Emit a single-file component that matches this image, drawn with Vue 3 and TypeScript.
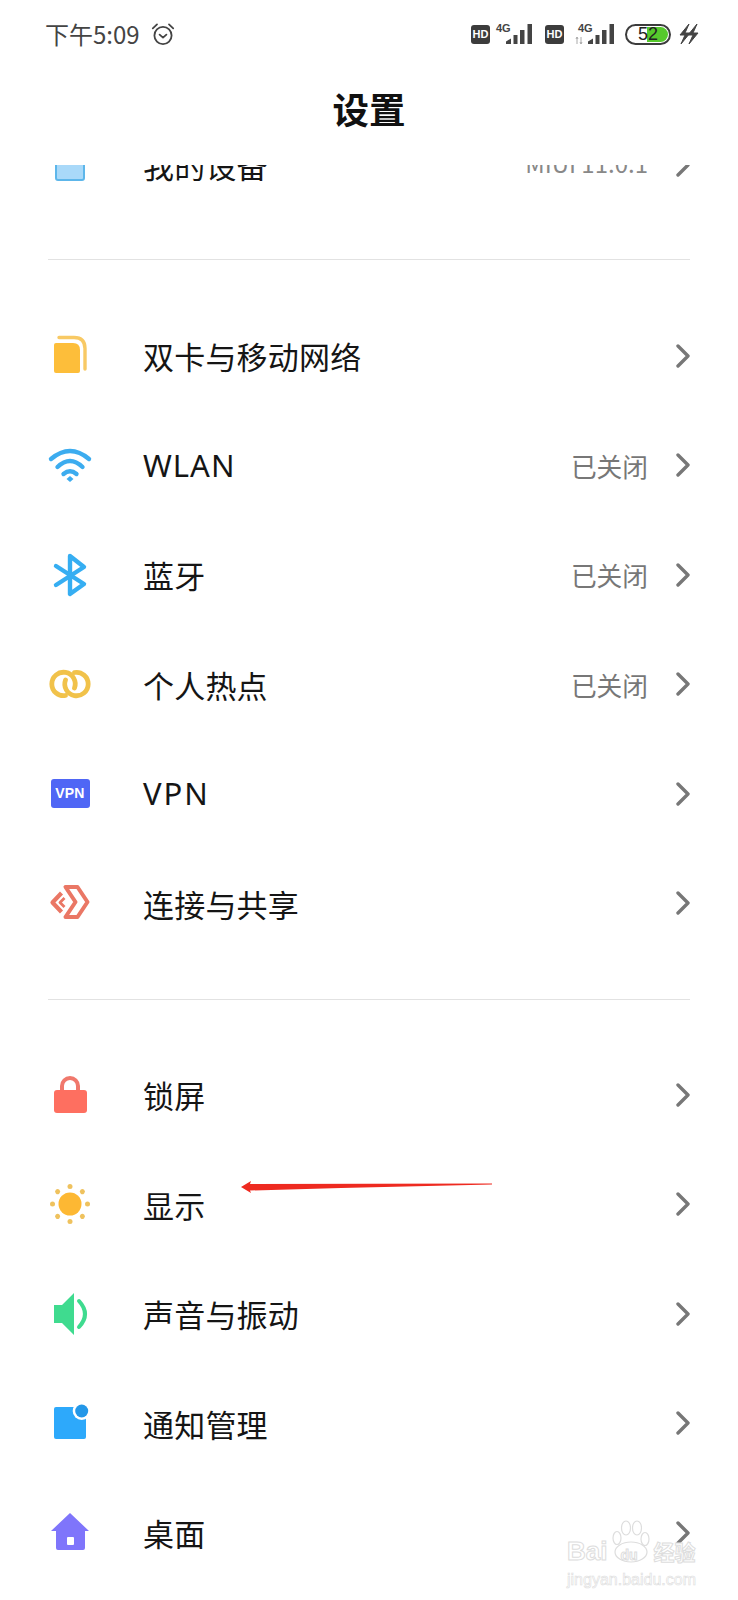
<script setup lang="ts">
interface Row { id: string; label: string; value?: string }
const clipped: Row = { id: 'device', label: '我的设备', value: 'MIUI 11.0.1' }
const groupA: Row[] = [
  { id: 'sim', label: '双卡与移动网络' },
  { id: 'wifi', label: 'WLAN', value: '已关闭' },
  { id: 'bt', label: '蓝牙', value: '已关闭' },
  { id: 'hotspot', label: '个人热点', value: '已关闭' },
  { id: 'vpn', label: 'VPN' },
  { id: 'share', label: '连接与共享' },
]
const groupB: Row[] = [
  { id: 'lock', label: '锁屏' },
  { id: 'sun', label: '显示' },
  { id: 'sound', label: '声音与振动' },
  { id: 'notify', label: '通知管理' },
  { id: 'home', label: '桌面' },
]
const groups = [groupA, groupB]
const rays = [0, 45, 90, 135, 180, 225, 270, 315]
const bars = 'M10 20v-2.500l5-3V20zM17.500 20V11h4v9zM24 20V6h4.500v14zM31.500 20V0H36v20z'
</script>

<template>
  <div class="phone">
    <div class="status">
      <div class="status-left">
        <span class="time">下午5:09</span>
        <svg class="alarm" viewBox="0 0 24 24" width="24" height="24" fill="none" stroke="#444" stroke-width="1.800" stroke-linecap="round" stroke-linejoin="round">
          <circle cx="12" cy="13.500" r="8.600" />
          <path d="M8.600 12.600 12 15.600l3.400-3M1.800 6.400 6 2.400M22.200 6.400 18 2.400" />
        </svg>
      </div>
      <div class="status-right">
        <span class="hd">HD</span>
        <svg class="sig" viewBox="0 0 38 20" width="38" height="20">
          <text x="0" y="8" class="four">4G</text>
          <path :d="bars" fill="#444" />
        </svg>
        <span class="hd hd2">HD</span>
        <svg class="sig sig2" viewBox="0 0 38 20" width="38" height="20">
          <text x="0" y="8" class="four">4G</text>
          <path d="M-1 13v7M-2 15l1-2 1 2M3 13v7M2 18l1 2 1-2" stroke="#aaa" stroke-width="1" fill="none" />
          <path :d="bars" fill="#444" />
        </svg>
        <div class="battery">
          <div class="level"></div>
          <span class="pct">52</span>
        </div>
        <svg class="bolts" viewBox="0 0 20 20" width="20" height="20" fill="#444" stroke="#444" stroke-width="1" stroke-linejoin="round">
          <path d="M10 0 1 11h5L2 20l9-11H6zM18 0 9 11h5l-4 9 9-11h-5z" />
        </svg>
      </div>
    </div>

    <header class="title">设置</header>

    <main class="list">
      <div class="row first">
        <span class="icon">
          <svg viewBox="0 0 44 44" width="44" height="44">
            <rect x="8" y="-4" width="28" height="41" rx="2" fill="#a9d9f9" stroke="#5db6ea" stroke-width="2" />
          </svg>
        </span>
        <span class="label">{{ clipped.label }}</span>
        <span class="value version">{{ clipped.value }}</span>
        <svg class="chev" viewBox="0 0 14 24" width="14" height="24" fill="none" stroke="#777" stroke-width="3.400" stroke-linecap="round" stroke-linejoin="round"><path d="M2 2l10 10L2 22" /></svg>
      </div>

      <section v-for="(group, gi) in groups" :key="gi" class="group" :class="'group-' + gi">
        <div v-for="row in group" :key="row.id" class="row">
          <span class="icon">
            <svg v-if="row.id === 'sim'" viewBox="0 0 44 44" width="44" height="44">
              <path d="M11 3.500h15q11 0 11 11V35" fill="none" stroke="#f8c964" stroke-width="3.400" stroke-linecap="round" stroke-linejoin="round" />
              <path d="M6 11q0-2 2-2h17q7 0 7 7v21q0 2-2 2H8q-2 0-2-2z" fill="#fdbe3a" />
            </svg>
            <svg v-else-if="row.id === 'wifi'" viewBox="0 0 44 44" width="44" height="44" fill="none" stroke="#3cacef" stroke-width="4.400" stroke-linecap="round">
              <path d="M3 16Q22 0 41 16" />
              <path d="M9.500 24Q22 12 34.500 24" />
              <path d="M15.500 31Q22 25.500 28.500 31" />
              <path d="M22 33l3.500 3-3.500 3-3.500-3z" fill="#3cacef" stroke="none" />
            </svg>
            <svg v-else-if="row.id === 'bt'" viewBox="0 0 44 44" width="44" height="44" fill="none" stroke="#36aef2" stroke-width="4.400" stroke-linejoin="round" stroke-linecap="round">
              <path d="M8 13 36 31 22 41V3l14 11L8 32" />
            </svg>
            <svg v-else-if="row.id === 'hotspot'" viewBox="0 0 44 44" width="44" height="44" fill="none" stroke="#f1c24a" stroke-width="4.800" stroke-linecap="round">
              <path d="M17.500 33.500A11.700 11.700 0 1 1 26.500 26" />
              <path d="M26.500 10.500A11.700 11.700 0 1 1 17.500 18" />
            </svg>
            <span v-else-if="row.id === 'vpn'" class="vpn">VPN</span>
            <svg v-else-if="row.id === 'share'" viewBox="0 0 44 44" width="44" height="44" fill="none" stroke="#ea7765" stroke-linejoin="round">
              <path d="M17.500 6H29.500L39.500 21 29.500 36H17.500L27.500 21z" stroke-width="4" />
              <path d="M13.500 12 4.500 21.500 13.500 31" stroke-width="4.200" />
              <path d="M16.500 17 12 21.500 16.500 26" stroke-width="2.800" />
            </svg>
            <svg v-else-if="row.id === 'lock'" viewBox="0 0 44 44" width="44" height="44">
              <path d="M14 19v-6a8 8 0 0 1 16 0v6" fill="none" stroke="#f0786c" stroke-width="4" />
              <rect x="6" y="17" width="33" height="23" rx="3" fill="#fe6f60" />
            </svg>
            <svg v-else-if="row.id === 'sun'" viewBox="0 0 44 44" width="44" height="44">
              <circle cx="22" cy="22" r="11.500" fill="#fdb833" />
              <circle v-for="a in rays" :key="a" cx="22" cy="4.500" r="2.500" fill="#efc25e" :transform="`rotate(${a} 22 22)`" />
            </svg>
            <svg v-else-if="row.id === 'sound'" viewBox="0 0 44 44" width="44" height="44">
              <path d="M6 13h8L26 1v42L14 31H6z" fill="#3fdb8f" />
              <path d="M31 9Q43 22 31 35" fill="none" stroke="#3fdb8f" stroke-width="4" stroke-linecap="round" />
            </svg>
            <svg v-else-if="row.id === 'notify'" viewBox="0 0 44 44" width="44" height="44">
              <path d="M6 8q0-2 2-2h30v30q0 2-2 2H8q-2 0-2-2z" fill="#2da9fb" />
              <circle cx="33.700" cy="10" r="9" fill="#fff" />
              <circle cx="33.700" cy="10" r="6.500" fill="#2397e8" />
            </svg>
            <svg v-else-if="row.id === 'home'" viewBox="0 0 44 44" width="44" height="44">
              <path d="M22 2 41 20h-4v17q0 2-2 2H10q-2 0-2-2V20H3z" fill="#7f75fb" />
              <rect x="19" y="26" width="7" height="8" rx="1" fill="#fff" />
            </svg>
          </span>
          <span class="label" :class="{ latin: row.id === 'wifi' || row.id === 'vpn', wide: row.id === 'vpn' }">{{ row.label }}</span>
          <span v-if="row.value" class="value">{{ row.value }}</span>
          <svg class="chev" viewBox="0 0 14 24" width="14" height="24" fill="none" stroke="#777" stroke-width="3.400" stroke-linecap="round" stroke-linejoin="round"><path d="M2 2l10 10L2 22" /></svg>
        </div>
      </section>
    </main>

    <svg class="arrow" viewBox="0 0 251 14" width="251" height="14">
      <path d="M0 7 10 1 9 4 251 3.600v.8L100 8 9 10.500 10 13z" fill="#ee2a20" />
    </svg>

    <div class="mark">
      <svg class="paw" viewBox="0 0 38 44" width="38" height="44" fill="#fff" stroke="#ddd" stroke-width="1.200">
        <ellipse cx="5" cy="18" rx="4" ry="6.500" />
        <ellipse cx="14" cy="8" rx="4.500" ry="7" />
        <ellipse cx="25" cy="8" rx="4.500" ry="7" />
        <ellipse cx="33" cy="19" rx="4" ry="6.500" />
        <ellipse cx="19" cy="32" rx="16" ry="10" />
      </svg>
      <div class="mark-line">
        <span>Bai</span><span class="du">du</span><span class="jy">经验</span>
      </div>
      <div class="mark-url">jingyan.baidu.com</div>
    </div>
  </div>
</template>

<style>
html, body { margin: 0; background: #fff; }
</style>

<style scoped>
.phone {
  position: relative;
  width: 738px;
  height: 1600px;
  overflow: hidden;
  background: #fff;
  font-family: "Noto Sans CJK SC", "Noto Sans", sans-serif;
  color: #111;
}
.status {
  height: 68px;
  display: flex;
  align-items: center;
  justify-content: space-between;
  padding: 0 39px 0 45px;
  box-sizing: border-box;
}
.status-left { display: flex; align-items: center; gap: 11px; margin-top: -2px; }
.alarm { margin-top: 1px; }
.time { font-size: 24px; color: #444; }
.status-right { display: flex; align-items: center; }
.hd {
  width: 19px; height: 19px; border-radius: 3px; background: #3c3c3c; color: #fff;
  font: 700 11px/19px "Liberation Sans", sans-serif; text-align: center;
}
.sig { margin-left: 6px; overflow: visible; }
.hd2 { margin-left: 11px; }
.sig2 { margin-left: 14px; margin-right: 9px; }
.four { font: 700 11px "Liberation Sans", sans-serif; fill: #444; }
.battery {
  position: relative; width: 46px; height: 21px; box-sizing: border-box;
  border: 2px solid #3c3c3c; border-radius: 11px; overflow: hidden;
}
.level { position: absolute; left: 20px; top: 1px; bottom: 1px; right: 1px; background: #56c92c; border-radius: 0 8px 8px 0; }
.pct {
  position: absolute; left: 0; right: 0; top: 0; text-align: center;
  font: 18px/17px "Liberation Sans", sans-serif; color: #222;
}
.bolts { margin-left: 8px; overflow: visible; }
.title {
  height: 97px;
  display: flex; align-items: center; justify-content: center;
  font-size: 36.500px; font-weight: 700; color: #111; padding-bottom: 26px; box-sizing: border-box; line-height: 1;
  padding-top: 12px;
}
.list { height: 1435px; overflow: hidden; }
.row {
  height: 109.500px;
  display: flex; align-items: center;
  padding: 0 48px 0 48px;
  box-sizing: border-box;
}
.first { margin-top: -55px; margin-bottom: 39.500px; }
.icon { width: 44px; height: 44px; flex: none; display: flex; align-items: center; justify-content: center; margin-right: 51px; }
.icon svg { overflow: visible; display: block; }
.label { flex: 1; font-size: 31px; line-height: 1; letter-spacing: .2px; color: #151515; }
.latin { font-family: "Noto Sans", sans-serif; font-size: 31px; letter-spacing: 1px; }
.wide { letter-spacing: 2px; }
.value { font-size: 25.700px; color: #777; margin-right: 28px; }
.version { font-size: 24px; margin-top: -4px; color: #888; }
.chev { flex: none; }
.group { border-top: 1px solid #e2e2e2; margin: 0 48px; padding: 41px 0 41px; }
.group .row { margin: 0 -48px; }
.group-1 { padding-top: 40px; }
.vpn {
  width: 39px; height: 29px; border-radius: 3px; background: #4f66f5; color: #fff;
  font: 700 14px/29px "Liberation Sans", sans-serif; text-align: center; letter-spacing: .2px;
}
.arrow { position: absolute; left: 241px; top: 1180px; }
.mark {
  position: absolute; left: 567px; top: 1520px; width: 134px; pointer-events: none;
  color: #fff;
}
.paw { position: absolute; left: 45px; top: 0; }
.mark-line {
  display: flex; align-items: baseline; margin-top: 16px;
  font: 700 26px/30px "Liberation Sans", sans-serif;
  -webkit-text-stroke: 1px #ddd;
  position: relative;
}
.du { font-size: 14px; margin-left: 13px; margin-right: 16px; }
.jy { font-size: 21px; font-family: "Noto Sans CJK SC", sans-serif; }
.mark-url {
  position: relative; font: 16px/20px "Liberation Sans", sans-serif;
  -webkit-text-stroke: .6px #ddd; white-space: nowrap;
}
</style>
